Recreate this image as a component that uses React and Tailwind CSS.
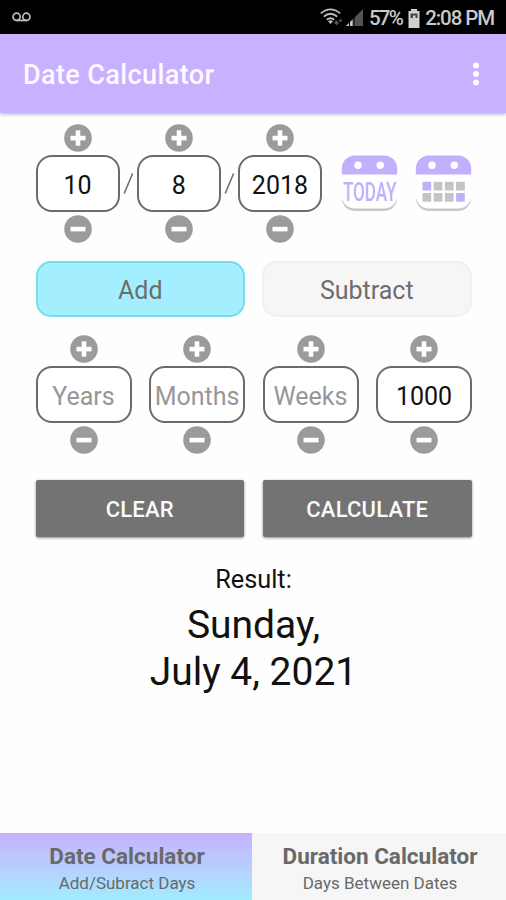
import React from "react";

function StepIcon({ plus }) {
  return (
    <svg width="28" height="28" viewBox="0 0 28 28" className="block shrink-0">
      <circle cx="14" cy="14" r="13.8" fill="#9b9b9b" />
      <rect x="6.5" y="11.8" width="15" height="4.6" fill="#fff" />
      {plus && <rect x="11.7" y="6.3" width="4.6" height="15.4" fill="#fff" />}
    </svg>
  );
}

function Stepper({ value, hint, width }) {
  return (
    <div className={`flex flex-col items-center ${width}`}>
      <StepIcon plus />
      <div
        className={`mt-[3px] mb-[3px] flex h-[57px] w-full items-center justify-center rounded-[16px] border-2 border-[#6b6b6b] bg-white pt-[3px] text-[25px] leading-none whitespace-nowrap ${
          hint ? "text-[#979797]" : "text-[#111]"
        }`}
      >
        {value}
      </div>
      <StepIcon />
    </div>
  );
}

function Slash() {
  return (
    <svg width="17" height="24" viewBox="0 0 17 24" className="mt-[1px] block shrink-0">
      <path d="M4.2 21.5 L12.6 1.5" stroke="#6f6f6f" strokeWidth="1.6" />
    </svg>
  );
}

function CalendarIcon({ children }) {
  return (
    <svg width="57" height="58" viewBox="0 0 57 58" className="block overflow-visible">
      <path d="M1 38v5a13 13 0 0 0 13 13h29a13 13 0 0 0 13-13v-5z" fill="#c8c8c8" />
      <path d="M0.8 18h55.4v22.5a13 13 0 0 1-13 13H13.8a13 13 0 0 1-13-13z" fill="#fff" />
      <path d="M0.8 19.5V13.5a13 13 0 0 1 13-13h29.4a13 13 0 0 1 13 13v6z" fill="#c2b0fc" />
      <circle cx="17" cy="10.3" r="3.7" fill="#fff" />
      <circle cx="39.3" cy="10.3" r="3.7" fill="#fff" />
      {children}
    </svg>
  );
}

const cells = [0, 1, 2, 3, 4, 5, 6, 7];

export default function App() {
  return (
    <div className="flex h-[900px] w-[506px] flex-col overflow-hidden bg-[#fefefe] font-['Roboto',sans-serif]">
      <div className="flex h-[34px] shrink-0 items-center justify-between bg-black pr-[12px] pl-[12px] text-[#c9c9c9]">
        <svg width="19" height="10" viewBox="0 0 19 10" fill="none" stroke="#bdbdbd" strokeWidth="1.7">
          <circle cx="4.6" cy="4.8" r="3.6" />
          <circle cx="14.4" cy="4.8" r="3.6" />
          <path d="M4.6 8.5h9.8" />
        </svg>
        <div className="flex items-center pt-[2px]">
          <svg width="44" height="20" viewBox="0 0 44 20" className="mr-[5px]" fill="none">
            <g stroke="#bdbdbd" strokeWidth="1.8">
              <path d="M0.8 5.4Q10.5-2.6 20.2 5.4" />
              <path d="M3.8 8.6Q10.5 2.8 17.2 8.6" />
              <path d="M6.8 11.8Q10.5 8.6 14.2 11.8" />
            </g>
            <path d="M8 13.2Q10.5 11.2 13 13.2L10.5 16z" fill="#bdbdbd" />
            <path d="M14 15l2.5-2.7 2.5 2.7-2.5 2.2z" fill="#555" />
            <path d="M18.5 12.6l2-2 2 2-2 2z" fill="#444" />
            <path d="M43 1v17H26z" fill="#535353" />
            <path d="M32.5 11.5V18H26z" fill="#c4c4c4" />
            <path d="M29.5 11v7M34 9v9" stroke="#000" strokeWidth="1" />
          </svg>
          <span className="text-[20.5px] leading-[20px] font-medium tracking-[-1.7px]">57%</span>
          <svg width="12" height="19" viewBox="0 0 12 19" className="mr-[5px] ml-[6px]">
            <path d="M3 0h6v2h2.5v17H0.5V2H3z" fill="#d0d0d0" />
            <path d="M2.5 4.5h7v4.5h-7z" fill="#444" />
            <path d="M5 6.5h2.5V9H5z" fill="#d0d0d0" />
          </svg>
          <span className="text-[20.5px] leading-[20px] font-medium tracking-[-1.1px]">2:08 PM</span>
        </div>
      </div>

      <header className="relative flex h-[79px] shrink-0 items-center justify-between bg-[#c8b1fe] pr-[26px] pl-[23px] shadow-[0_2px_3px_rgba(0,0,0,0.22)]">
        <h1 className="pt-[4px] text-[27px] leading-none font-medium tracking-[0.4px] text-[#fdf9ff]">Date Calculator</h1>
        <svg width="8" height="24" viewBox="0 0 8 24" fill="#fff">
          <circle cx="4" cy="3.5" r="3" />
          <circle cx="4" cy="12" r="3" />
          <circle cx="4" cy="20.5" r="3" />
        </svg>
      </header>

      <main className="flex flex-1 flex-col pt-[11px] pr-[34.5px] pl-[35.5px]">
        <div className="flex items-center">
          <Stepper value="10" width="w-[84.5px]" />
          <Slash />
          <Stepper value="8" width="w-[84.5px]" />
          <Slash />
          <Stepper value="2018" width="w-[84.5px]" />
          <div className="ml-[18.5px] flex gap-[17px]">
            <CalendarIcon>
              <text transform="translate(2 45.5) scale(0.64 1)" fontSize="26.5" fontWeight="500" fill="#c2b0fc">
                TODAY
              </text>
            </CalendarIcon>
            <CalendarIcon>
              {cells.map((i) => (
                <rect
                  key={i}
                  x={7.5 + (i % 4) * 11.2}
                  y={26.8 + Math.floor(i / 4) * 11.2}
                  width="8.7"
                  height="8.7"
                  fill={i === 0 || i === 7 ? "#c2b0fc" : "#c4c4c4"}
                />
              ))}
            </CalendarIcon>
          </div>
        </div>

        <div className="mt-[18px] flex gap-[17px] text-[25px] leading-none text-[#6d6d6d]">
          <div className="flex h-[56px] flex-1 items-center justify-center rounded-[15px] border-2 border-[#74dcec] bg-[#a3efff] pt-[2px]">Add</div>
          <div className="flex h-[56px] flex-1 items-center justify-center rounded-[15px] border-2 border-[#f0f0f0] bg-[#f6f6f6] pt-[2px]">Subtract</div>
        </div>

        <div className="mt-[18px] -mr-[0.5px] flex justify-between">
          <Stepper value="Years" hint width="w-[96px]" />
          <Stepper value="Months" hint width="w-[96px]" />
          <Stepper value="Weeks" hint width="w-[96px]" />
          <Stepper value="1000" width="w-[96px]" />
        </div>

        <div className="mt-[26px] flex gap-[19px] text-[22px] leading-none font-medium tracking-[0.2px] text-[#fafafa]">
          <div className="flex h-[57px] flex-1 items-center justify-center rounded-[2px] bg-[#737373] pt-[3px] shadow-[0_1px_3px_rgba(0,0,0,0.45)]">CLEAR</div>
          <div className="flex h-[57px] flex-1 items-center justify-center rounded-[2px] bg-[#737373] pt-[3px] shadow-[0_1px_3px_rgba(0,0,0,0.45)]">CALCULATE</div>
        </div>

        <div className="mt-[28px] text-center text-[#111]">
          <p className="text-[25.3px] leading-[30px]">Result:</p>
          <p className="mt-[7px] text-[39px] leading-[47px]">
            Sunday,
            <br />
            July 4, 2021
          </p>
        </div>
      </main>

      <nav className="flex h-[67px] shrink-0 text-center text-[#696969]">
        <div className="flex w-[252px] flex-col items-center bg-linear-to-b from-[#c6b1fe] to-[#a1ebff] pt-[10px] pl-[2px]">
          <span className="text-[22.5px] leading-[26px] font-bold">Date Calculator</span>
          <span className="text-[17px] leading-[28px]">Add/Subract Days</span>
        </div>
        <div className="flex flex-1 flex-col items-center bg-[#f6f6f6] pt-[10px] pl-[2px]">
          <span className="text-[22.5px] leading-[26px] font-bold">Duration Calculator</span>
          <span className="text-[17px] leading-[28px]">Days Between Dates</span>
        </div>
      </nav>
    </div>
  );
}
